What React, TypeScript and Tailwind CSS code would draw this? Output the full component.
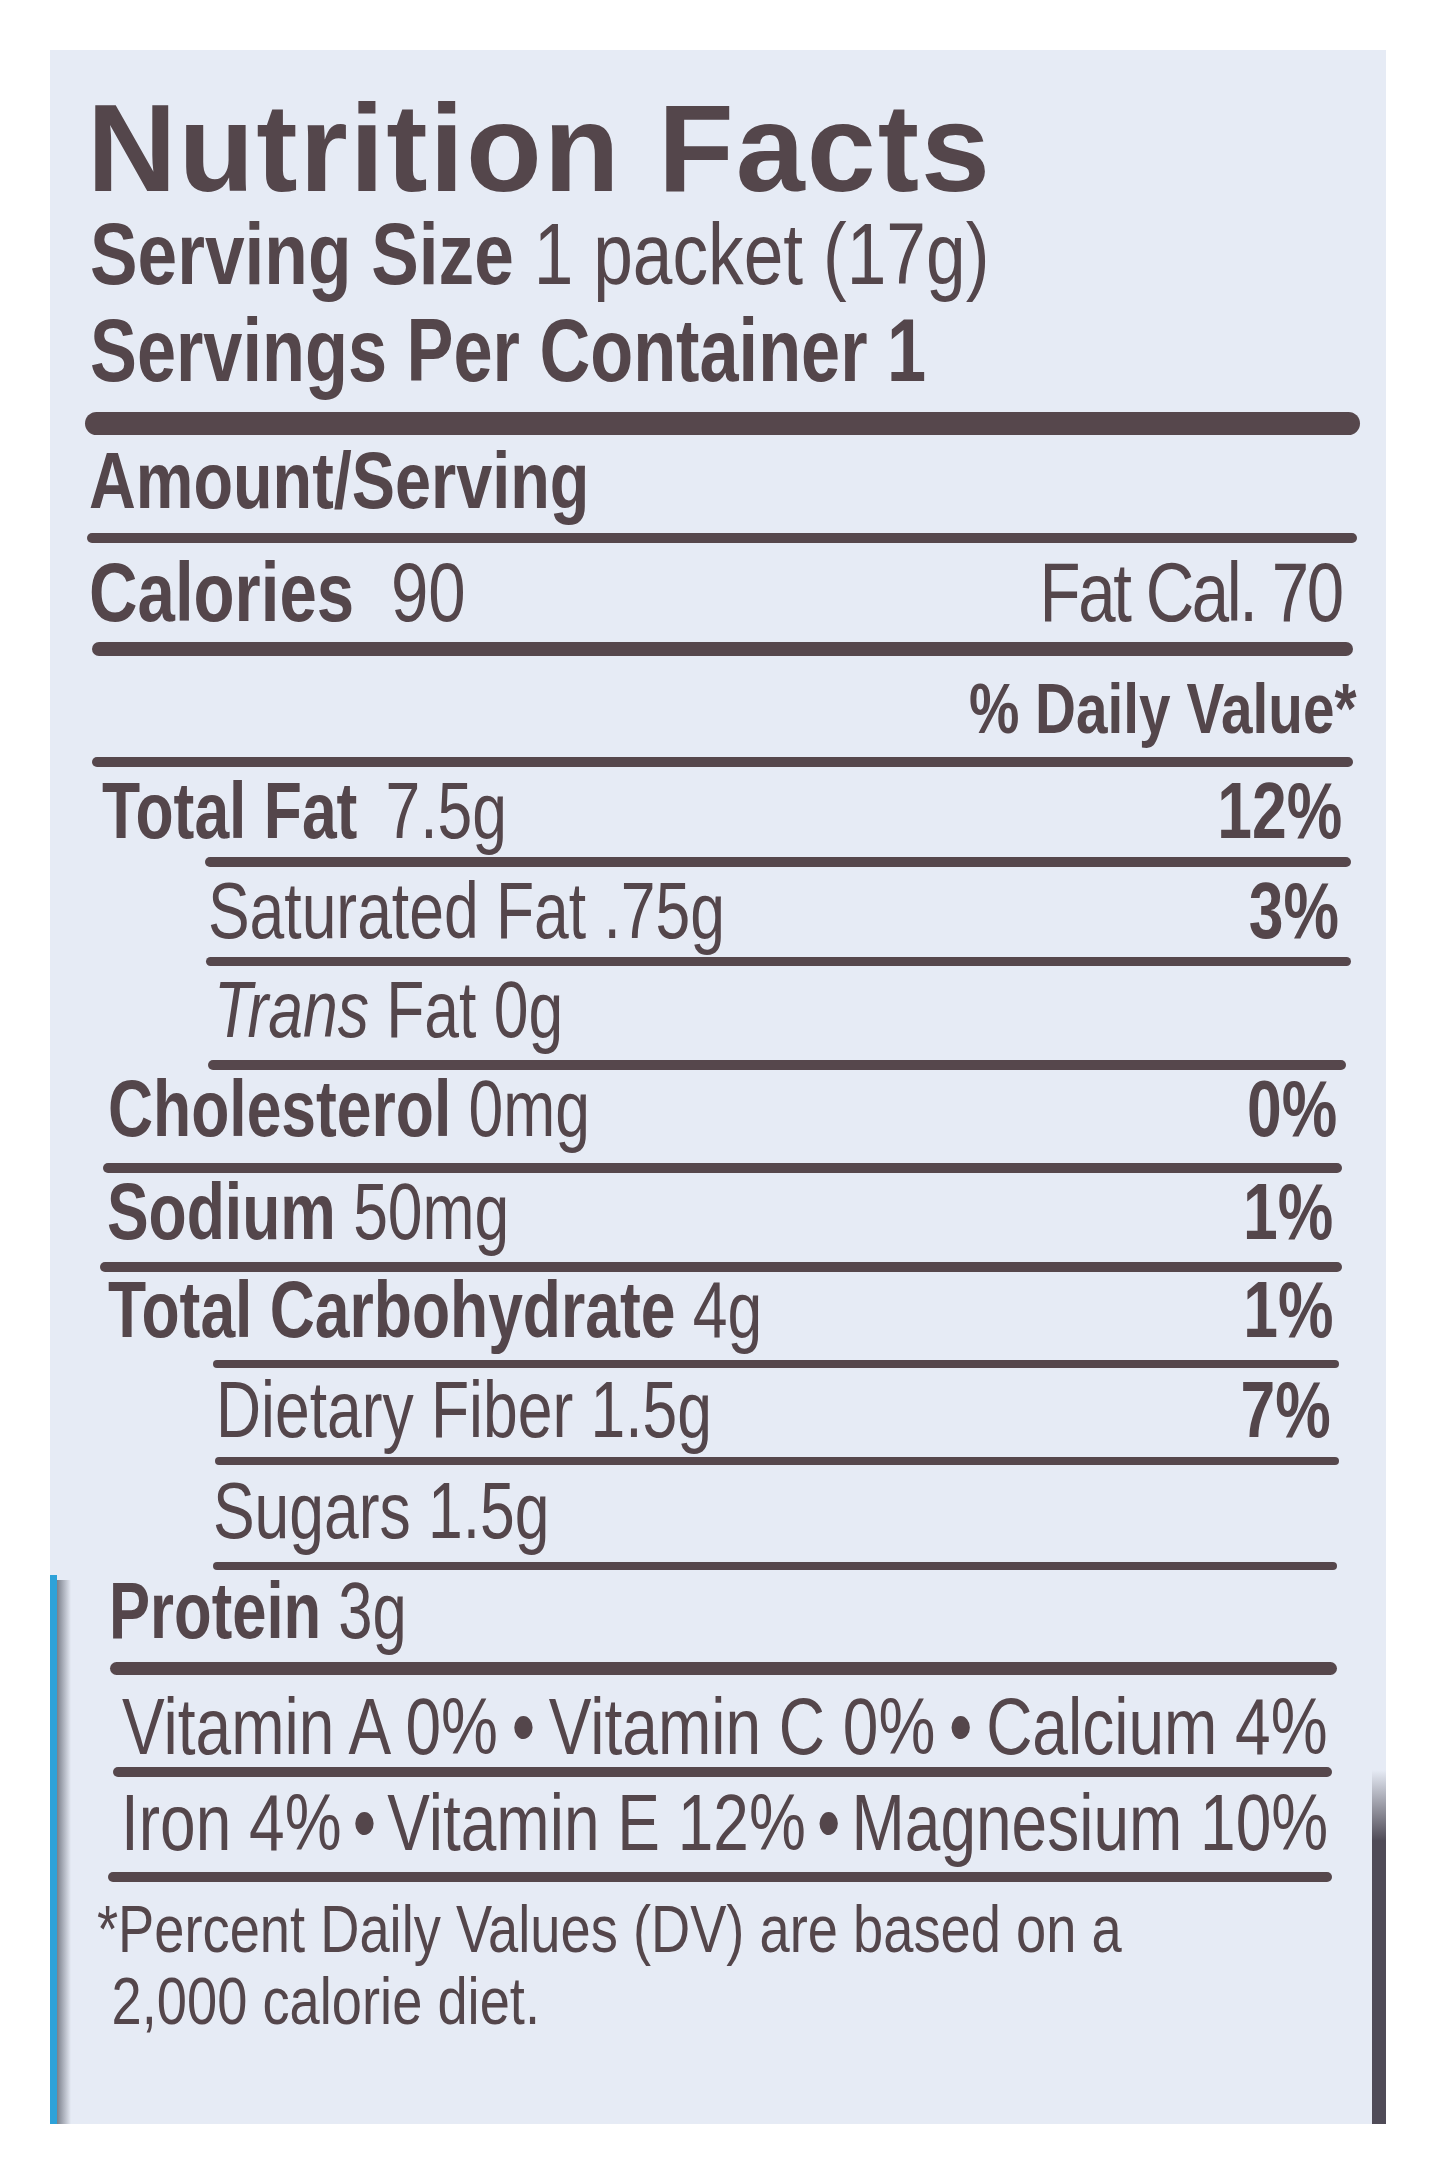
const sans = "font-['Liberation_Sans',Arial,sans-serif]";

function Rule({ className }: { className: string }) {
  return <div className={`shrink-0 rounded-full bg-[#56474c] ${className}`} />;
}

function Row({ className, children }: { className: string; children: React.ReactNode }) {
  return <div className={`flex shrink-0 items-center leading-none whitespace-nowrap ${className}`}>{children}</div>;
}

// the label is set in a condensed face, so every line is squeezed horizontally
function Squeeze({ className = '', children }: { className?: string; children: React.ReactNode }) {
  return <div className={`flex shrink-0 origin-left items-center ${className}`}>{children}</div>;
}

export default function App() {
  return (
    <div className="min-h-[2174px] w-full bg-white pl-[50px] pt-[50px]">
      <div className={`relative flex h-[2074px] w-[1336px] flex-col overflow-hidden bg-[#e6ebf5] text-[#54464b] ${sans}`}>
        {/* package edges showing around the label */}
        <div className="absolute bottom-0 left-0 top-[1525px] w-[7px] bg-[#2ea2d9]" />
        <div className="absolute bottom-0 left-[7px] top-[1530px] w-[14px] bg-linear-to-r from-[#5f6470] to-transparent opacity-80" />
        <div className="absolute bottom-0 right-0 top-[1720px] w-[14px] bg-linear-to-b from-transparent to-[#4f4b57] to-20%" />

        <Row className="mt-[37px] h-[122px] pl-[37px] text-[124px] leading-[110px] font-bold tracking-[2px]">Nutrition Facts</Row>
        <Row className="h-[89px] pl-[40px] text-[88px] leading-[80px]">
          <Squeeze className="scale-x-[0.81]">
            <span className="font-bold">Serving Size</span>&nbsp;1 packet (17g)
          </Squeeze>
        </Row>
        <Row className="h-[104px] pl-[40px] text-[89px] leading-[80px] font-bold">
          <Squeeze className="scale-x-[0.79]">Servings Per Container 1</Squeeze>
        </Row>

        <Rule className="ml-[35px] mr-[26px] mt-[10px] h-[23px]" />
        <Row className="h-[98px] pb-[6px] pl-[39px] text-[80px] font-bold">
          <Squeeze className="scale-x-[0.81]">Amount/Serving</Squeeze>
        </Row>
        <Rule className="ml-[37px] mr-[29px] h-[10px]" />
        <Row className="h-[99px] pb-[2px] pl-[39px] text-[84px]">
          <Squeeze className="w-[1566px] scale-x-[0.8] justify-between">
            <span>
              <span className="font-bold">Calories</span>
              <span className="ml-[46px]">90</span>
            </span>
            <span className="tracking-[-3px]">Fat Cal. 70</span>
          </Squeeze>
        </Row>
        <Rule className="ml-[42px] mr-[33px] h-[14px]" />
        <Row className="h-[101px] justify-end pr-[29px] pt-[4px] text-[70px] font-bold">
          <div className="origin-right scale-x-[0.81]">% Daily Value*</div>
        </Row>
        <Rule className="ml-[42px] mr-[33px] h-[10px]" />

        <Row className="h-[90px] pb-[2px] pl-[52px] text-[80px]">
          <Squeeze className="w-[1590px] scale-x-[0.78] justify-between">
            <span>
              <span className="font-bold">Total Fat</span>
              <span className="ml-[36px]">7.5g</span>
            </span>
            <span className="font-bold">12%</span>
          </Squeeze>
        </Row>
        <Rule className="ml-[155px] mr-[35px] h-[10px]" />
        <Row className="h-[90px] pb-[2px] pl-[158px] text-[80px]">
          <Squeeze className="w-[1450px] scale-x-[0.78] justify-between">
            <span>Saturated Fat .75g</span>
            <span className="font-bold">3%</span>
          </Squeeze>
        </Row>
        <Rule className="ml-[156px] mr-[35px] h-[9px]" />
        <Row className="h-[94px] pb-[6px] pl-[164px] text-[80px]">
          <Squeeze className="scale-x-[0.78]">
            <span className="italic">Trans</span>&nbsp;Fat 0g
          </Squeeze>
        </Row>
        <Rule className="ml-[158px] mr-[40px] h-[10px]" />

        <Row className="h-[93px] pb-[15px] pl-[58px] text-[80px]">
          <Squeeze className="w-[1576px] scale-x-[0.78] justify-between">
            <span>
              <span className="font-bold">Cholesterol</span> 0mg
            </span>
            <span className="font-bold">0%</span>
          </Squeeze>
        </Row>
        <Rule className="ml-[53px] mr-[44px] h-[10px]" />
        <Row className="h-[89px] pb-[11px] pl-[57px] text-[80px]">
          <Squeeze className="w-[1572px] scale-x-[0.78] justify-between">
            <span>
              <span className="font-bold">Sodium</span> 50mg
            </span>
            <span className="font-bold">1%</span>
          </Squeeze>
        </Row>
        <Rule className="ml-[50px] mr-[44px] h-[10px]" />
        <Row className="h-[88px] pb-[13px] pl-[58px] text-[80px]">
          <Squeeze className="w-[1571px] scale-x-[0.78] justify-between">
            <span>
              <span className="font-bold">Total Carbohydrate</span> 4g
            </span>
            <span className="font-bold">1%</span>
          </Squeeze>
        </Row>
        <Rule className="ml-[163px] mr-[47px] h-[8px]" />
        <Row className="h-[89px] pb-[5px] pl-[166px] text-[80px]">
          <Squeeze className="w-[1429px] scale-x-[0.78] justify-between">
            <span>Dietary Fiber 1.5g</span>
            <span className="font-bold">7%</span>
          </Squeeze>
        </Row>
        <Rule className="ml-[165px] mr-[47px] h-[8px]" />
        <Row className="h-[97px] pb-[6px] pl-[163px] text-[80px]">
          <Squeeze className="scale-x-[0.78]">Sugars 1.5g</Squeeze>
        </Row>
        <Rule className="ml-[163px] mr-[49px] h-[8px]" />
        <Row className="h-[92px] pb-[11px] pl-[59px] text-[80px]">
          <Squeeze className="scale-x-[0.77]">
            <span className="font-bold">Protein</span>&nbsp;3g
          </Squeeze>
        </Row>
        <Rule className="ml-[60px] mr-[49px] h-[13px]" />

        <Row className="h-[92px] pl-[72px] pt-[11px] text-[80px]">
          <Squeeze className="w-[1507px] scale-x-[0.8] justify-between">
            <span>Vitamin A 0%</span>
            <span className="font-bold">•</span>
            <span>Vitamin C 0%</span>
            <span className="font-bold">•</span>
            <span>Calcium 4%</span>
          </Squeeze>
        </Row>
        <Rule className="ml-[63px] mr-[54px] h-[10px]" />
        <Row className="h-[95px] pb-[3px] pl-[71px] text-[80px]">
          <Squeeze className="w-[1509px] scale-x-[0.8] justify-between">
            <span>Iron 4%</span>
            <span className="font-bold">•</span>
            <span>Vitamin E 12%</span>
            <span className="font-bold">•</span>
            <span>Magnesium 10%</span>
          </Squeeze>
        </Row>
        <Rule className="ml-[58px] mr-[54px] h-[10px]" />

        <div className="pt-[11px] text-[67px] leading-[72px] whitespace-nowrap">
          <div className="origin-left scale-x-[0.81] pl-[58px]">*Percent Daily Values (DV) are based on a</div>
          <div className="origin-left scale-x-[0.81] pl-[76px]">2,000 calorie diet.</div>
        </div>
      </div>
    </div>
  );
}
